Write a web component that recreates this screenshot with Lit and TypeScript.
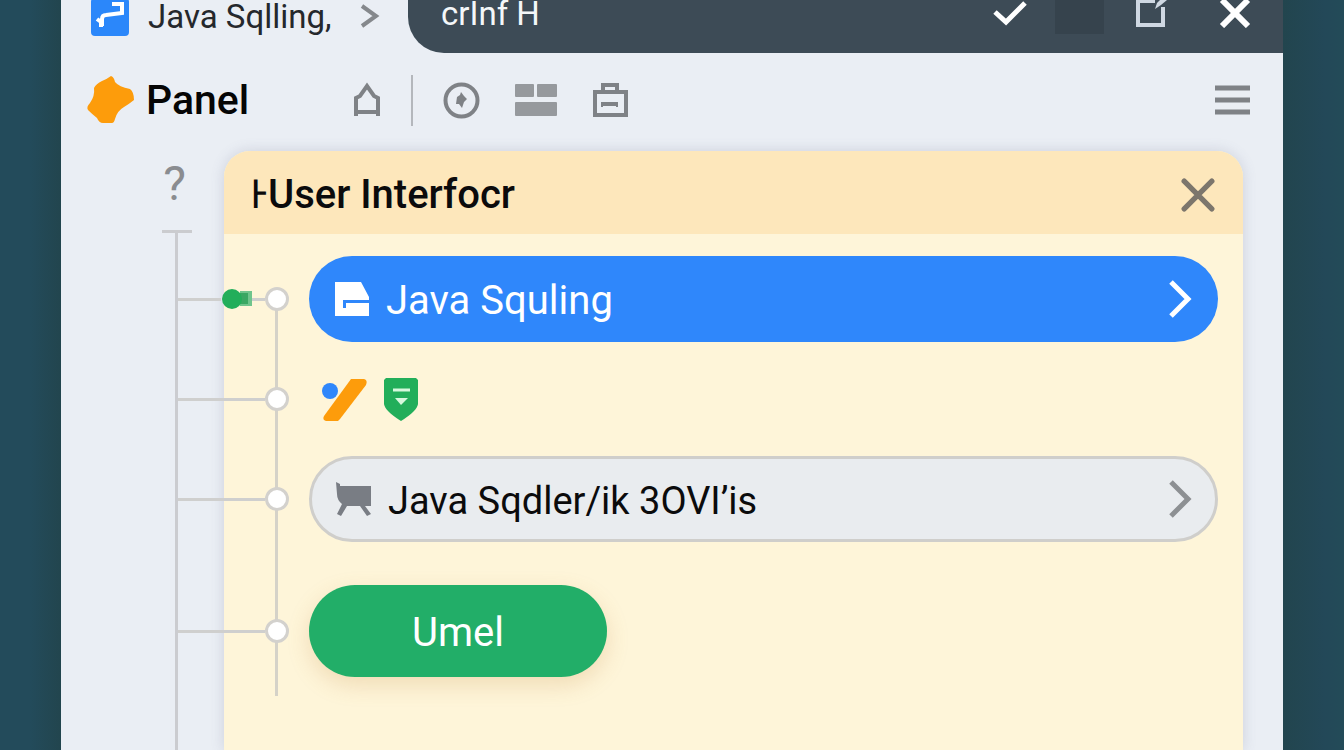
import { LitElement, html, css, svg } from "lit";
import { customElement } from "lit/decorators.js";

const chevron = (cls: string) => html`
  <svg class=${cls} width="24" height="40" viewBox="0 0 24 40" aria-hidden="true">
    <path d="M3 3 L20 20 L3 37" fill="none" stroke="currentColor" stroke-width="5" />
  </svg>`;

const cross = (size: number, width: number) => html`
  <svg width=${size} height=${size} viewBox="0 0 32 32" aria-hidden="true">
    ${svg`<path d="M3 3 L29 29 M29 3 L3 29" fill="none" stroke="currentColor" stroke-linecap="round" stroke-width=${width} />`}
  </svg>`;

@customElement("app-root")
export class AppRoot extends LitElement {
  static styles = css`
    :host {
      display: block;
      min-height: 100vh;
      box-sizing: border-box;
      padding: 0 61px;
      font-family: Roboto, "Liberation Sans", sans-serif;
      color: #0b0b0c;
      background: linear-gradient(90deg, #234b5b 0, #234b5b 30px, #22454e 61px, #22454e calc(100% - 61px), #234858 calc(100% - 20px), #234b58 100%);
    }
    * { box-sizing: border-box; }
    svg { display: block; flex: none; }
    button {
      display: flex;
      align-items: center;
      margin: 0;
      padding: 0;
      border: 0;
      background: none;
      color: inherit;
      font: inherit;
      cursor: pointer;
    }
    h1, h2 { margin: 0; font-weight: 500; }
    .window {
      display: flex;
      flex-direction: column;
      min-height: 100vh;
      background: #eaeef4;
    }
    .titlebar { display: flex; height: 53px; overflow: hidden; }
    .tab {
      display: flex;
      align-items: center;
      width: 347px;
      height: 34px;
      padding: 0 28px 0 30px;
      font-size: 33px;
      line-height: 34px;
      color: #25282c;
      white-space: nowrap;
    }
    .tab-name { flex: 1; margin-left: 19px; }
    .tab .chev { color: #85888c; }
    .strip {
      display: flex;
      flex: 1;
      align-items: flex-start;
      justify-content: space-between;
      padding: 0 32px 0 33px;
      border-bottom-left-radius: 36px;
      background: #3d4b56;
      color: #f4f7f9;
    }
    .strip-name { height: 28px; font-size: 33px; line-height: 28px; }
    .controls { display: flex; align-items: flex-start; color: #ffffff; }
    .swatch { width: 49px; height: 34px; margin: 0 31px 0 28px; background: #36434d; }
    .close { margin-left: 52px; }
    .toolbar {
      display: flex;
      align-items: center;
      height: 98px;
      padding: 0 33px 4px 25px;
      color: #7f8286;
    }
    .toolbar h1 {
      width: 207px;
      margin-left: 12px;
      font-size: 41px;
      line-height: 48px;
      color: #050505;
    }
    .divider { width: 2px; height: 51px; margin: 0 30px; background: #b4b7bc; }
    .tools { display: flex; flex: 1; align-items: center; gap: 34px; }
    .body { display: flex; flex: 1; padding-right: 40px; }
    .gutter {
      display: flex;
      flex-direction: column;
      align-items: center;
      width: 163px;
      padding: 9px 0 0 68px;
      color: #8a8c90;
    }
    .help { margin: 0 4px 22px 0; font-size: 48px; line-height: 48px; }
    .cap { width: 30px; height: 3px; background: #cbcccf; }
    .trunk { flex: 1; width: 3px; background: #cbccd0; }
    .card {
      flex: 1;
      border-radius: 26px 26px 0 0;
      background: #fef5d9;
      box-shadow: 0 0 14px rgba(90, 95, 130, 0.2);
    }
    .card-head {
      display: flex;
      align-items: center;
      justify-content: space-between;
      height: 83px;
      padding: 4px 28px 0 26px;
      border-radius: 26px 26px 0 0;
      background: #fde7bb;
    }
    .card-head h2 { font-size: 40px; line-height: 48px; }
    .card-head button { color: #7c766c; }
    .rows {
      display: grid;
      grid-template-columns: 131px 1fr;
      grid-template-rows: 86px 44px 86px 100px;
      row-gap: 35px;
      margin-left: -46px;
      padding: 22px 25px 74px 0;
    }
    .rail {
      grid-area: 1 / 1 / 5 / 2;
      width: 3px;
      margin: 43px 0 -19px 97px;
      background: #d5d2c8;
    }
    .link { display: flex; grid-column: 1; align-items: center; }
    .r1 { grid-row: 1; }
    .r2 { grid-row: 2; }
    .r3 { grid-row: 3; }
    .r4 { grid-row: 4; }
    .line { width: 87px; height: 3px; background: #cfcfce; }
    .line-start { width: 43px; }
    .line-end { width: 13px; }
    .dot { width: 24px; height: 24px; border: 3px solid #d3d1cd; border-radius: 50%; background: #ffffff; }
    .pill {
      grid-column: 2;
      padding: 0 26px;
      border-radius: 43px;
      font-size: 40px;
      line-height: 48px;
      white-space: nowrap;
    }
    .pill-name { flex: 1; margin-left: 17px; padding-top: 4px; text-align: left; }
    .blue { background: #2f87fb; color: #ffffff; }
    .grey { padding: 0 23px; border: 3px solid #cfcecb; background: #e9ecef; font-size: 38px; }
    .grey .chev { color: #8d9093; }
    .badges { display: flex; grid-column: 2; align-items: center; gap: 16px; padding-left: 12px; }
    .r4.link, .action { margin-top: 8px; }
    .action {
      grid-column: 2;
      justify-content: center;
      width: 298px;
      padding-top: 4px;
      border-radius: 46px;
      background: #22ae68;
      box-shadow: 0 8px 22px rgba(190, 130, 60, 0.22);
      color: #ffffff;
      font-size: 40px;
      line-height: 48px;
    }
  `;

  render() {
    return html`
      <div class="window">
        <header class="titlebar">
          <div class="tab">
            <svg width="38" height="38" viewBox="0 0 38 38" aria-hidden="true">
              <rect width="38" height="38" rx="4" fill="#2b87fa" />
              <path d="M6 21 L10 24 V29 M11 28 V21 Q11 17 15 17 L31 15 V6 H23 V8" fill="none" stroke="#fff" stroke-width="4" />
            </svg>
            <span class="tab-name">Java Sqlling,</span>
            <svg class="chev" width="20" height="26" viewBox="0 0 20 26" aria-hidden="true">
              <path d="M2 2 L16 12 L2 22" fill="none" stroke="currentColor" stroke-width="4" />
            </svg>
          </div>
          <div class="strip">
            <span class="strip-name">crInf H</span>
            <div class="controls">
              <button aria-label="Accept">
                <svg width="34" height="28" viewBox="0 0 34 28"><path d="M2 12 L13 22 L32 3" fill="none" stroke="currentColor" stroke-width="5" /></svg>
              </button>
              <span class="swatch"></span>
              <button aria-label="Open">
                <svg width="32" height="28" viewBox="0 0 32 28">
                  <path d="M20 1 H3 V25 H28 V7" fill="none" stroke="#cfd8e2" stroke-width="4" />
                  <path d="M20 9 L22 3 L25 0 H32 L26 5 Z" fill="#cfd8e2" />
                </svg>
              </button>
              <button class="close" aria-label="Close window">
                <svg width="32" height="28" viewBox="0 0 32 28"><path d="M3 0 L29 26 M29 0 L3 26" fill="none" stroke="currentColor" stroke-width="6" /></svg>
              </button>
            </div>
          </div>
        </header>

        <nav class="toolbar">
          <svg width="48" height="50" viewBox="0 0 48 50" aria-hidden="true">
            <path d="M25 1 Q28 2 29 7 Q33 12 44 14 Q48 17 48 25 Q43 29 38 32 Q31 36 29 44 Q28 48 26 48 H17 Q13 48 11 43 Q6 39 2 35 Q0 32 4 28 Q9 21 8 13 Q10 9 16 6 Q21 4 25 1 Z" fill="#fd9c0b" />
          </svg>
          <h1>Panel</h1>
          <button aria-label="Home">
            <svg width="28" height="36" viewBox="0 0 28 36">
              <path d="M3 34 V16 L7 14 L14 4 L21 14 L25 16 V34 M3 30 H25" fill="none" stroke="currentColor" stroke-width="4" />
            </svg>
          </button>
          <span class="divider"></span>
          <div class="tools">
            <button aria-label="Explore">
              <svg width="37" height="37" viewBox="0 0 37 37">
                <circle cx="18.500" cy="18.500" r="16" fill="none" stroke="currentColor" stroke-width="4" />
                <path d="M18 10 L21 14 L24 17 L21 20 L19 26 L16 22 L13 22 L14 15 L17 13 Z" fill="currentColor" />
              </svg>
            </button>
            <button aria-label="Layout">
              <svg width="44" height="32" viewBox="0 0 44 32" fill="#96999d">
                <rect x="1" width="19" height="13" rx="1" /><rect x="23" width="20" height="13" rx="1" /><rect x="1" y="18" width="42" height="14" rx="1" />
              </svg>
            </button>
            <button aria-label="Toolbox">
              <svg width="36" height="36" viewBox="0 0 36 36" fill="none" stroke="currentColor" stroke-width="4">
                <rect x="3" y="10" width="31" height="23" /><path d="M11 10 V3 H25 V10 M9 22 H26" /><path d="M10 22 V25 M25 22 V25" stroke-width="2" />
              </svg>
            </button>
          </div>
          <button aria-label="Menu">
            <svg width="35" height="30" viewBox="0 0 35 30"><path d="M0 3 H35 M0 15 H35 M0 27 H35" stroke="currentColor" stroke-width="5" /></svg>
          </button>
        </nav>

        <main class="body">
          <aside class="gutter">
            <button class="help" aria-label="Help">?</button>
            <span class="cap"></span>
            <span class="trunk"></span>
          </aside>
          <section class="card">
            <div class="card-head">
              <h2>ͰUser Interfocr</h2>
              <button aria-label="Close panel">${cross(34, 5)}</button>
            </div>
            <div class="rows">
              <span class="rail"></span>

              <div class="link r1">
                <span class="line line-start"></span>
                <svg width="31" height="22" viewBox="0 0 31 22" aria-hidden="true">
                  <rect x="19" y="3" width="12" height="15" fill="#6fc48c" />
                  <rect x="17" y="5" width="10" height="11" fill="#3aa763" />
                  <circle cx="11" cy="11" r="10" fill="#22ae5a" />
                </svg>
                <span class="line line-end"></span>
                <span class="dot"></span>
              </div>
              <button class="pill blue r1">
                <svg width="34" height="34" viewBox="0 0 34 34" aria-hidden="true">
                  <path d="M0 0 H26 L34 15 V18 H8 V26 H11 V21 H34 V34 H0 Z" fill="#fff" />
                </svg>
                <span class="pill-name">Java Squling</span>
                ${chevron("chev")}
              </button>

              <div class="link r2"><span class="line"></span><span class="dot"></span></div>
              <div class="badges r2">
                <svg width="47" height="43" viewBox="0 0 47 43" aria-hidden="true">
                  <path d="M30 1 H43 Q47 2 45 7 L19 41 L17 43 H5 Q1 42 3 38 Z" fill="#fd9c0b" />
                  <circle cx="9" cy="13" r="8" fill="#2f87fb" />
                </svg>
                <svg width="34" height="43" viewBox="0 0 34 43" aria-hidden="true">
                  <path d="M2 0 H32 L34 2 V26 Q33 33 17 43 Q1 33 0 26 V2 Z" fill="#22ae5a" />
                  <path d="M9 12 H26" stroke="#d6f8dd" stroke-width="3" />
                  <path d="M11 20 H24 L17 27 Z" fill="#d6f8dd" />
                </svg>
              </div>

              <div class="link r3"><span class="line"></span><span class="dot"></span></div>
              <button class="pill grey r3">
                <svg width="36" height="34" viewBox="0 0 36 34" aria-hidden="true" fill="#797d84">
                  <path d="M1 0 L5 2 V4 H36 V24 H30 L36 32 L32 34 L25 24 H12 L6 34 L2 32 L7 22 Q2 18 2 12 Z" />
                </svg>
                <span class="pill-name">Java Sqdler/ik 3OVI’is</span>
                ${chevron("chev")}
              </button>

              <div class="link r4"><span class="line"></span><span class="dot"></span></div>
              <button class="action r4">Umel</button>
            </div>
          </section>
        </main>
      </div>
    `;
  }
}
